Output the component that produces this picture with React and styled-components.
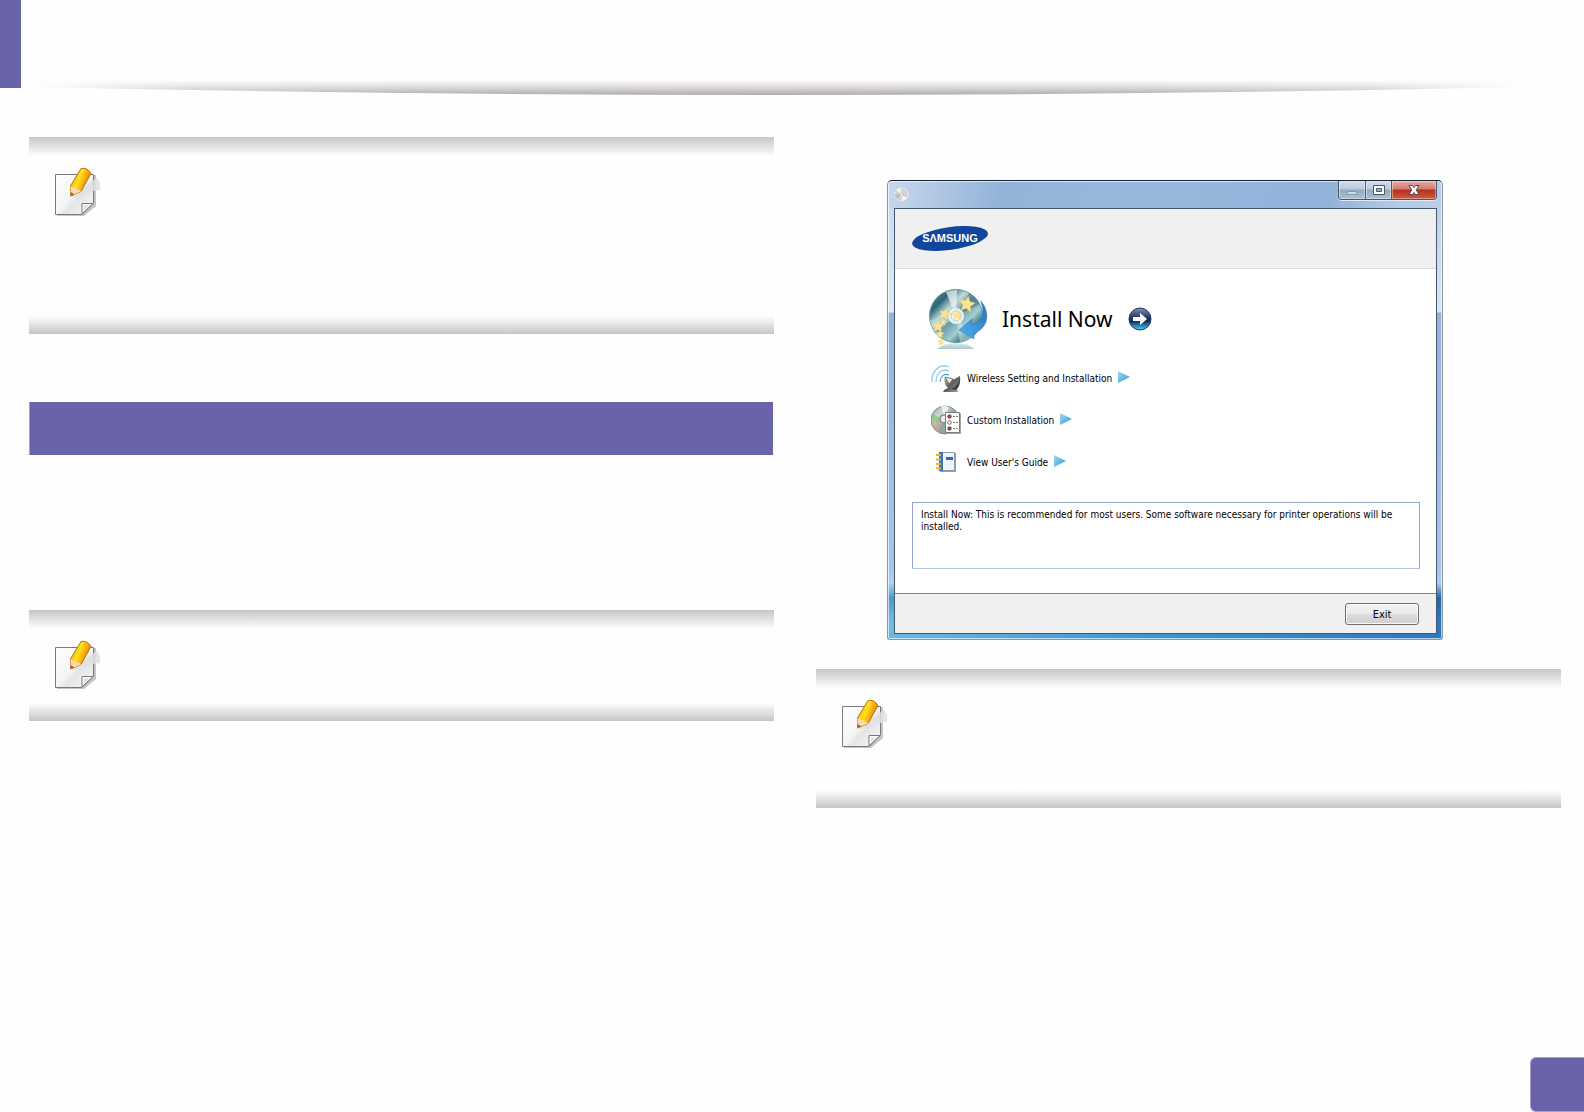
import React from "react";
import styled, { createGlobalStyle } from "styled-components";

const GlobalStyle = createGlobalStyle`
  * {
    box-sizing: border-box;
  }

  body {
    margin: 0;
    background: #fefefe;
    color: #000;
    font-family: "DejaVu Sans Condensed", "Noto Sans", sans-serif;
  }
`;

const Page = styled.div`
  min-height: 100vh;
  display: flex;
  flex-direction: column;
`;

const Header = styled.header`
  height: 96px;
  display: flex;
  align-items: flex-start;
`;

const HeaderMark = styled.div`
  flex: none;
  width: 21px;
  height: 88px;
  background: #6963a9;
`;

const HeaderShadow = styled.svg`
  display: block;
  flex: 1;
  min-width: 0;
  height: 16px;
  align-self: flex-end;
  margin: 0 58px 0 9px;
`;

const Columns = styled.main`
  flex: 1;
  display: flex;
  align-items: flex-start;
  gap: 42px;
  padding: 41px 23px 0 29px;
`;

const Column = styled.section`
  flex: 1;
  min-width: 0;
  display: flex;
  flex-direction: column;
`;

const Note = styled.aside`
  min-height: ${({ $height }) => $height}px;
  padding: 30px 25px;
  background:
    linear-gradient(#c6c6c6, #fefefe) top / 100% 19px no-repeat,
    linear-gradient(#fefefe, #c6c6c6) bottom / 100% 18px no-repeat;

  svg {
    display: block;
  }
`;

const SectionBar = styled.div`
  height: 53px;
  margin: 68px 1px 155px 0;
  background: #6963a9;
  border-left: 1px solid #a5a1cc;
`;

const Window = styled.div`
  width: 556px;
  max-width: calc(100% - 71px);
  margin: 43px 0 29px 71px;
  padding: 0 5px 5px 6px;
  border: 1px solid #8d969f;
  border-top: 1px solid #15202e;
  border-radius: 5px 5px 3px 3px;
  box-shadow: inset 0 0 0 1px rgba(255, 255, 255, 0.65);
  background:
    linear-gradient(90deg, #69b8e2, #3b94d0 50%, #2a78bf) bottom / 100% 6px no-repeat,
    linear-gradient(#cbdcf0, #dfe9f5 104px, #93b5dc 105px, #a5c5e9 360px, #b3d0ee 375px, #4a9bc9 390px, #6dbae3 412px) left 27px / 7px 100% no-repeat,
    linear-gradient(#bdd2ea, #d9e6f4 104px, #93b5dc 105px, #a5c5e9 360px, #aecbec 375px, #1f66a4 390px, #2a78bf 412px) right 27px / 7px 100% no-repeat,
    linear-gradient(100deg, #c9d8ec, #93b3d9 18%, #98b8dd 40%, #92b3da 70%, #b6cce6 82%, #bdd2ea);
`;

const TitleBar = styled.div`
  height: 27px;
  display: flex;
  justify-content: space-between;
  align-items: flex-start;
`;

const TitleIcon = styled.svg`
  display: block;
  margin-top: 6px;
`;

const Controls = styled.div`
  display: flex;
  border: 1px solid #46566d;
  border-top: 0;
  border-radius: 0 0 4px 4px;
  overflow: hidden;
  box-shadow: 0 1px 0 #dfeaf6;
`;

const ControlButton = styled.button`
  width: ${({ $wide }) => ($wide ? 45 : 26)}px;
  height: 18px;
  padding: 0;
  display: flex;
  align-items: center;
  justify-content: center;
  border: 0;
  border-left: ${({ $first }) => ($first ? "0" : "1px solid #4d5c72")};
  box-shadow: inset 0 0 0 1px rgba(255, 255, 255, 0.4);
  background: ${({ $wide }) =>
    $wide
      ? "linear-gradient(#e6aea4, #d07c70 45%, #b5301a 50%, #cf5a3c)"
      : "linear-gradient(#cfdceb, #bccbdd 45%, #93a9c2 50%, #a9c0d8)"};
`;

const Client = styled.div`
  border: 1px solid #45566e;
  background: #fff;
`;

const Brand = styled.div`
  height: 60px;
  padding: 17px;
  background: #f0f0f0;
  border-bottom: 1px solid #d9dfdf;
`;

const Body = styled.div`
  padding: 20px 16px 24px 17px;
`;

const InstallLink = styled.a`
  display: flex;
  align-items: center;
  width: max-content;
  margin-left: 17px;
  color: #000;
  text-decoration: none;
  font-family: "Noto Sans", sans-serif;
  font-size: 21px;
  line-height: 60px;

  svg {
    display: block;
  }

  span {
    margin: 0 15px 0 14px;
  }
`;

const Options = styled.ul`
  margin: 8px 0 19px 19px;
  padding: 0;
  list-style: none;
`;

const OptionLink = styled.a`
  display: flex;
  align-items: center;
  gap: 6px;
  width: max-content;
  height: 42px;
  color: #000;
  font-size: 10px;
  text-decoration: none;

  svg {
    display: block;
  }
`;

const Description = styled.p`
  min-height: 67px;
  margin: 0;
  padding: 6px 8px;
  border: 1px solid #93a5d5;
  border-bottom-color: #b4c3e6;
  font-size: 10px;
  line-height: 12px;
`;

const Actions = styled.div`
  height: 40px;
  padding: 9px 17px;
  display: flex;
  justify-content: flex-end;
  border-top: 1px solid #82868c;
  background: #f0f0f0;
`;

const ExitButton = styled.button`
  width: 74px;
  height: 22px;
  padding: 0;
  border: 1px solid #707070;
  border-radius: 3px;
  box-shadow: inset 0 0 0 1px #fafafa;
  background: linear-gradient(#f2f2f2, #ebebeb 50%, #dddddd 51%, #cfcfcf);
  color: #000;
  font-family: inherit;
  font-size: 11px;
`;

const Footer = styled.footer`
  display: flex;
  justify-content: flex-end;
`;

const PageTab = styled.div`
  width: 54px;
  height: 55px;
  border: 1px solid #a5a1cc;
  border-right: 0;
  border-radius: 6px 0 0 6px;
  background: #6963a9;
`;

const star = "M0-7 2-2.6 7-2 3.4 1.4 4.3 6.4 0 4-4.3 6.4-3.4 1.4-7-2-2-2.6Z";

const NoteIcon = () => (
  <svg width="48" height="50" viewBox="0 0 48 50" aria-hidden="true">
    <defs>
      <linearGradient id="paper" x1="0" y1="0" x2="1" y2="1">
        <stop offset="0" stopColor="#fff" />
        <stop offset="0.5" stopColor="#f3f4f4" />
        <stop offset="0.6" stopColor="#e4e5e5" />
        <stop offset="1" stopColor="#fafafa" />
      </linearGradient>
      <linearGradient id="pencil" x1="0.1" y1="0.3" x2="0.9" y2="0.7">
        <stop offset="0" stopColor="#f9b800" />
        <stop offset="0.35" stopColor="#ffe21a" />
        <stop offset="0.6" stopColor="#f8b413" />
        <stop offset="1" stopColor="#d96a12" />
      </linearGradient>
    </defs>
    <path d="M3 8H42V39L30 49H3Z" fill="#c4c5c6" />
    <path d="M1.500 7.500H39.500V36L28 47.500H1.500Z" fill="url(#paper)" stroke="#77797b" />
    <path d="M17 30 37 15 43 11 46 16V23L39 24 25 30Z" fill="#dfe0e2" opacity="0.85" />
    <path d="M28 47V36.500H39Z" fill="#fbfbfb" stroke="#77797b" />
    <path d="M30 43V38.500H35Z" fill="#dcdddd" />
    <path d="M16.500 19 27 1.500Q33 0 37 6.500L27 24.500 16.500 29Z" fill="url(#pencil)" stroke="#ba7010" />
    <path d="M16.500 19.500Q19 19 20 21Q23 20 24 23Q26 22 27 24.500L16.500 29Z" fill="#f7d9b0" />
    <path d="M16.500 25V29L20.500 27.500Z" fill="#a95b0e" />
  </svg>
);

const SamsungLogo = () => (
  <svg width="76" height="26" viewBox="0 0 76 26" role="img" aria-label="Samsung">
    <ellipse cx="38" cy="12.500" rx="38.300" ry="11.300" transform="rotate(-8 38 12.500)" fill="#10479d" />
    <text
      x="38"
      y="16"
      textAnchor="middle"
      fill="#fff"
      fontFamily="Liberation Sans, sans-serif"
      fontSize="11"
      fontWeight="700"
    >
      SΛMSUNG
    </text>
  </svg>
);

const InstallDisc = () => (
  <svg width="59" height="60" viewBox="0 0 59 60" aria-hidden="true">
    <defs>
      <linearGradient id="disc" x1="0" y1="0" x2="1" y2="1">
        <stop offset="0" stopColor="#5f9fb5" />
        <stop offset="0.22" stopColor="#2f6677" />
        <stop offset="0.36" stopColor="#c3dade" />
        <stop offset="0.5" stopColor="#6a9eaa" />
        <stop offset="0.66" stopColor="#a3ccd3" />
        <stop offset="0.8" stopColor="#2b6873" />
        <stop offset="1" stopColor="#76aebc" />
      </linearGradient>
      <linearGradient id="swoop" x1="1" y1="0" x2="0" y2="1">
        <stop offset="0" stopColor="#2b6fb5" />
        <stop offset="1" stopColor="#4eb4ef" />
      </linearGradient>
      <linearGradient id="mirror" x1="0" y1="0" x2="0" y2="1">
        <stop offset="0" stopColor="#e3ecee" />
        <stop offset="1" stopColor="#a9c8cd" />
      </linearGradient>
    </defs>
    <path d="M8 60Q14 54 27 54Q40 54 45 60Z" fill="url(#mirror)" />
    <circle cx="27" cy="27" r="26.500" fill="url(#disc)" stroke="#6b97a3" />
    <path d="M27 27 17 3Q22 1 28 1Z" fill="#e7f3f4" opacity="0.75" />
    <path d="M27 27 40 4Q47 8 51 15Z" fill="#2c6472" opacity="0.45" />
    <path d="M27 27 43 48Q38 52 31 53Z" fill="#d7eef1" opacity="0.5" />
    <path d="M27 27 1 31Q2 38 6 43Z" fill="#b7dce4" opacity="0.6" />
    <circle cx="27" cy="27" r="8" fill="#e9f2ee" />
    <circle cx="27" cy="27" r="5" fill="#f8f5df" stroke="#b6cfd1" />
    <g fill="#fde391" stroke="#f3d269" strokeWidth="0.500">
      <path d={star} transform="translate(38 15) rotate(10) scale(1.100)" />
      <path d={star} transform="translate(28 26) scale(0.700)" />
      <path d={star} transform="translate(16 25) rotate(15) scale(0.800)" />
      <path d={star} transform="translate(14 33) scale(0.500)" />
      <path d={star} transform="translate(9 37) scale(0.800)" />
      <path d={star} transform="translate(11 45) scale(0.600)" />
      <path d={star} transform="translate(12 53) scale(0.500)" />
    </g>
    <path d="M52 12Q60 22 57 33Q53 42 45 44V50L30 41 43 30V35Q50 35 53 28Q55 21 52 12Z" fill="url(#swoop)" stroke="#327fc4" strokeWidth="0.600" />
  </svg>
);

const GoArrow = () => (
  <svg width="24" height="24" viewBox="0 0 24 24" aria-hidden="true">
    <defs>
      <linearGradient id="ball" x1="0" y1="0" x2="0" y2="1">
        <stop offset="0" stopColor="#8a93b5" />
        <stop offset="0.4" stopColor="#2a3a6a" />
        <stop offset="0.6" stopColor="#0d2c63" />
        <stop offset="1" stopColor="#4fd3fb" />
      </linearGradient>
    </defs>
    <circle cx="12" cy="12" r="11" fill="url(#ball)" stroke="#26396b" />
    <path d="M5 10H12V6L19 12 12 18V14H5Z" fill="#fff" />
  </svg>
);

const WirelessIcon = () => (
  <svg width="30" height="30" viewBox="0 0 30 30" aria-hidden="true">
    <defs>
      <linearGradient id="dish" x1="0" y1="0" x2="1" y2="1">
        <stop offset="0" stopColor="#d8d8d8" />
        <stop offset="0.5" stopColor="#5c5c5c" />
        <stop offset="1" stopColor="#a8a8a8" />
      </linearGradient>
    </defs>
    <g fill="none" stroke="#8cc6e8" strokeWidth="1.200">
      <path d="M1 19C0 9 8 0 18 4" />
      <path d="M5 19C5 11 10 5 18 8" />
      <path d="M9 19C9 14 13 10 18 12" stroke="#3f9bd2" />
    </g>
    <path d="M13 15Q21 19 29 13Q30 22 26 26L27 29H12Q13 26 17 25Q13 21 13 15Z" fill="url(#dish)" />
    <path d="M29 13Q29 22 20 26L25 27Q30 22 29 13Z" fill="#3f4142" />
    <path d="M14 14 22 16 18 21Z" fill="#eee" stroke="#555" strokeWidth="0.800" />
  </svg>
);

const CustomIcon = () => (
  <svg width="30" height="30" viewBox="0 0 30 30" aria-hidden="true">
    <defs>
      <linearGradient id="cd" x1="0" y1="0" x2="1" y2="1">
        <stop offset="0" stopColor="#9aa5a1" />
        <stop offset="0.3" stopColor="#d0d4d1" />
        <stop offset="0.5" stopColor="#8fae9a" />
        <stop offset="1" stopColor="#929d9b" />
      </linearGradient>
    </defs>
    <circle cx="14" cy="15" r="14" fill="url(#cd)" stroke="#7b8a86" />
    <path d="M14 15 1 9Q0 14 1 18Z" fill="#7fc46f" opacity="0.6" />
    <path d="M14 15 6 27Q3 24 1 19Z" fill="#dba79c" opacity="0.6" />
    <path d="M14 15 10 1Q14 0 18 2Z" fill="#f3f5f4" opacity="0.8" />
    <circle cx="13" cy="14" r="4" fill="#e9ecea" stroke="#6d7775" />
    <path d="M15 8H30V29H15Z" fill="#a5a5a5" />
    <path d="M14.500 7.500H28.500V27.500H14.500Z" fill="#fff" stroke="#777" />
    <circle cx="18.500" cy="11.500" r="1.800" fill="#d53a32" stroke="#444" strokeWidth="0.800" />
    <circle cx="18.500" cy="17.500" r="1.800" fill="#fff" stroke="#444" strokeWidth="0.800" />
    <path d="M17 22H20V25H17Z" fill="#d53a32" stroke="#444" strokeWidth="0.800" />
    <path d="M22 11.500H27M22 17.500H27M22 23.500H27" stroke="#777" strokeDasharray="2 1" />
  </svg>
);

const GuideIcon = () => (
  <svg width="30" height="30" viewBox="0 0 30 30" aria-hidden="true">
    <path d="M9 6H25V25H9Z" fill="#9a9ea3" />
    <path d="M8.500 5.500H23.500V23.500H8.500Z" fill="#eef4fa" stroke="#8b97a5" />
    <path d="M8 5H12V24H8Z" fill="#3a72bd" />
    <path d="M15 10H22V13H15Z" fill="#2f66b5" />
    <path d="M5 8H10M5 12.500H10M5 17H10M5 21.500H10" stroke="#e5b13a" strokeWidth="2" />
  </svg>
);

const PlayMark = () => (
  <svg width="12" height="14" viewBox="0 0 12 14" aria-hidden="true">
    <defs>
      <linearGradient id="play" x1="0" y1="0" x2="1" y2="1">
        <stop offset="0" stopColor="#a5dcf5" />
        <stop offset="1" stopColor="#2f93cf" />
      </linearGradient>
    </defs>
    <path d="M0 0 12 6 0 12Z" fill="url(#play)" />
  </svg>
);

const options = [
  { label: "Wireless Setting and Installation", Icon: WirelessIcon },
  { label: "Custom Installation", Icon: CustomIcon },
  { label: "View User's Guide", Icon: GuideIcon },
];

const InstallerWindow = () => (
  <Window>
    <TitleBar>
      <TitleIcon width="15" height="15" viewBox="0 0 15 15" aria-hidden="true">
        <circle cx="7.500" cy="7.500" r="6.500" fill="#d3d1d0" stroke="#e9ecef" />
        <path d="M7.500 7.500 2 3Q4 1 7 1ZM7.500 7.500 13 11Q11 14 8 14Z" fill="#f6f2ec" />
        <path d="M7.500 7.500 1 7Q1 10 3 12Z" fill="#b9bfb9" />
        <circle cx="7.500" cy="7.500" r="1.500" fill="#f5f5f5" stroke="#aaa" strokeWidth="0.500" />
      </TitleIcon>
      <Controls>
        <ControlButton type="button" aria-label="Minimize" $first>
          <svg width="12" height="14" viewBox="0 0 12 14">
            <path d="M1.500 8.500H10.500V11.500H1.500Z" fill="#cfdae3" stroke="#8898aa" />
          </svg>
        </ControlButton>
        <ControlButton type="button" aria-label="Maximize">
          <svg width="12" height="12" viewBox="0 0 12 12">
            <path d="M0.500 1.500H11.500V10.500H0.500Z" fill="#fff" stroke="#4b566b" />
            <path d="M3.500 4.500H8.500V7.500H3.500Z" fill="#9ab0c9" stroke="#4b566b" />
          </svg>
        </ControlButton>
        <ControlButton type="button" aria-label="Close" $wide>
          <svg width="12" height="12" viewBox="0 0 12 12">
            <path
              d="M1 1.500H4.500L6 3.500 7.500 1.500H11L8.300 6 11 10.500H7.500L6 8.500 4.500 10.500H1L3.700 6Z"
              fill="#fff"
              stroke="#56485a"
            />
          </svg>
        </ControlButton>
      </Controls>
    </TitleBar>
    <Client>
      <Brand>
        <SamsungLogo />
      </Brand>
      <Body>
        <InstallLink href="#install">
          <InstallDisc />
          <span>Install Now</span>
          <GoArrow />
        </InstallLink>
        <Options>
          {options.map(({ label, Icon }) => (
            <li key={label}>
              <OptionLink href="#option">
                <Icon />
                {label}
                <PlayMark />
              </OptionLink>
            </li>
          ))}
        </Options>
        <Description>
          Install Now: This is recommended for most users. Some software
          necessary for printer operations will be installed.
        </Description>
      </Body>
      <Actions>
        <ExitButton type="button">Exit</ExitButton>
      </Actions>
    </Client>
  </Window>
);

const App = () => {
  return (
    <>
      <GlobalStyle />
      <Page>
        <Header>
          <HeaderMark />
          <HeaderShadow viewBox="0 0 1496 16" preserveAspectRatio="none" aria-hidden="true">
            <defs>
              <linearGradient id="shade" gradientUnits="userSpaceOnUse" x1="0" y1="0" x2="0" y2="16">
                <stop offset="0" stopColor="#fefefe" />
                <stop offset="0.5" stopColor="#dad7d7" />
                <stop offset="1" stopColor="#aaa4a5" />
              </linearGradient>
              <linearGradient id="fade">
                <stop offset="0" stopColor="#000" />
                <stop offset="0.1" stopColor="#ccc" />
                <stop offset="0.25" stopColor="#fff" />
                <stop offset="0.75" stopColor="#fff" />
                <stop offset="0.9" stopColor="#ccc" />
                <stop offset="1" stopColor="#000" />
              </linearGradient>
              <mask id="ends">
                <rect width="1496" height="16" fill="url(#fade)" />
              </mask>
            </defs>
            <path d="M0 0H1496V7Q748 23 0 7Z" fill="url(#shade)" mask="url(#ends)" />
          </HeaderShadow>
        </Header>
        <Columns>
          <Column>
            <Note $height={197}>
              <NoteIcon />
            </Note>
            <SectionBar />
            <Note $height={111}>
              <NoteIcon />
            </Note>
          </Column>
          <Column>
            <InstallerWindow />
            <Note $height={139}>
              <NoteIcon />
            </Note>
          </Column>
        </Columns>
        <Footer>
          <PageTab />
        </Footer>
      </Page>
    </>
  );
};

export default App;
